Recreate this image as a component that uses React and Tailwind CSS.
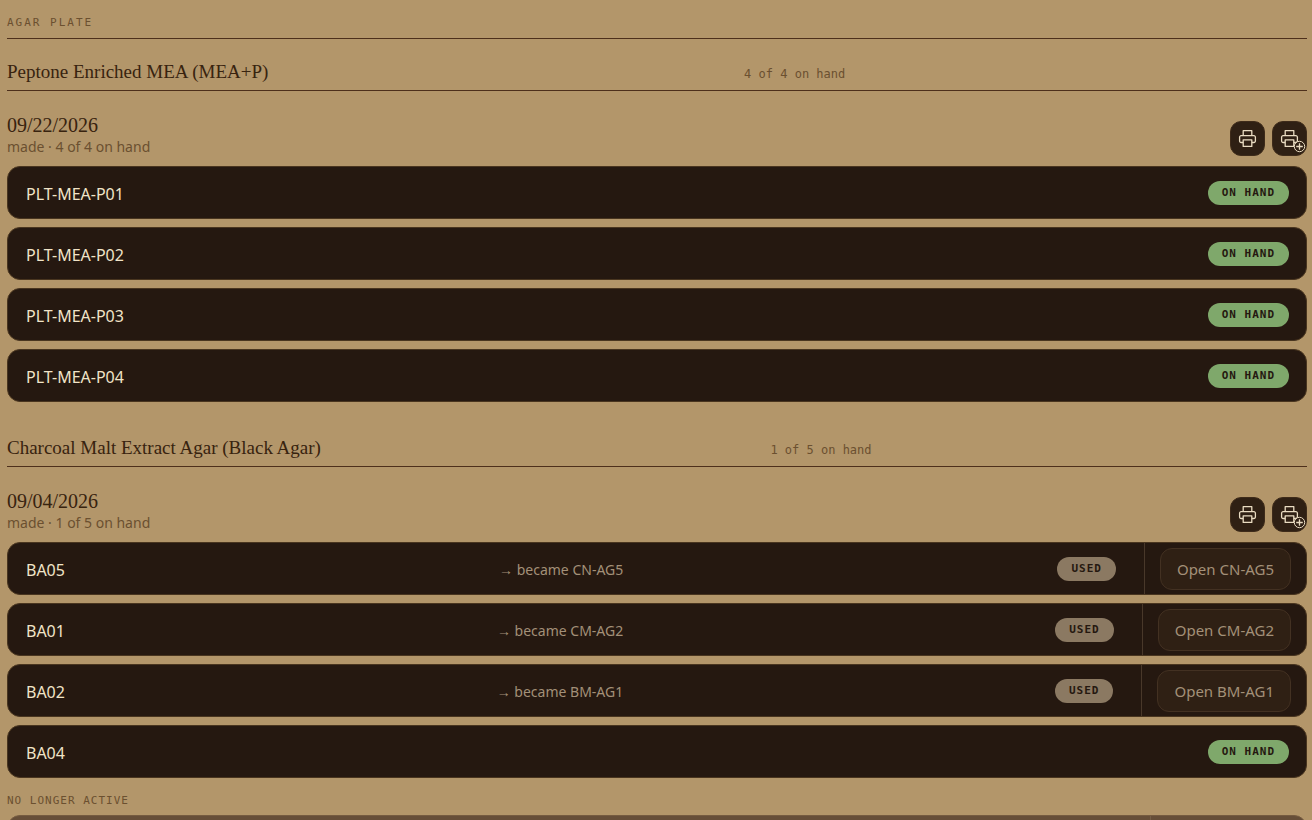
import React from 'react';

// ===== Data =====
const GROUPS = [
  {
    id: 'mea-p',
    name: 'Peptone Enriched MEA (MEA+P)',
    count: '4 of 4 on hand',
    date: '09/22/2026',
    plates: [
      { code: 'PLT-MEA-P01' },
      { code: 'PLT-MEA-P02' },
      { code: 'PLT-MEA-P03' },
      { code: 'PLT-MEA-P04' },
    ],
  },
  {
    id: 'black-agar',
    name: 'Charcoal Malt Extract Agar (Black Agar)',
    count: '1 of 5 on hand',
    date: '09/04/2026',
    plates: [
      { code: 'BA05', became: 'CN-AG5' },
      { code: 'BA01', became: 'CM-AG2' },
      { code: 'BA02', became: 'BM-AG1' },
      { code: 'BA04' },
    ],
  },
];

// ===== Icons =====
function PrinterIcon() {
  return (
    <svg width="19" height="19" viewBox="0 0 19 19" fill="none" stroke="currentColor" strokeWidth="1.3" strokeLinejoin="round" aria-hidden="true">
      <path d="M5.2 6.7V1.7h8.6v5" />
      <path d="M5.2 13.5H3.1a1.5 1.5 0 0 1-1.5-1.5V8.2a1.5 1.5 0 0 1 1.5-1.5h12.8a1.5 1.5 0 0 1 1.5 1.5V12a1.5 1.5 0 0 1-1.5 1.5h-2.1" />
      <path d="M5.2 10.8h8.6v6.6H5.2z" />
    </svg>
  );
}

function PlusBadge() {
  return (
    <svg className="absolute right-0 bottom-0.5" width="13" height="13" viewBox="0 0 13 13" fill="none" stroke="currentColor" aria-hidden="true">
      <circle cx="6.5" cy="6.5" r="5.2" fill="#2f2014" strokeWidth="1" />
      <path d="M6.5 3.2v6.6M3.2 6.5h6.6" strokeWidth="1.3" />
    </svg>
  );
}

// ===== Status pill =====
function Pill({ used }) {
  return (
    <span
      className={`shrink-0 h-6 px-3.5 pt-0.5 flex items-center rounded-full font-['DejaVu_Sans_Mono',monospace] text-[11px] font-bold tracking-[1px] uppercase text-[#251810] ${
        used ? 'bg-[#8b7962]' : 'bg-[#7fa86b]'
      }`}
    >
      {used ? 'Used' : 'On hand'}
    </span>
  );
}

// ===== Plate row =====
function PlateRow({ plate }) {
  return (
    <li className="min-h-[53px] flex items-stretch rounded-[13px] border border-[#49351f] bg-[#251810] overflow-hidden">
      <button type="button" className={`flex-1 min-w-0 flex items-center gap-3.5 pl-[18px] text-left ${plate.became ? 'pr-7' : 'pr-[17px]'}`}>
        <span className="flex-auto pt-0.5 text-base text-[#f1e4c8]">{plate.code}</span>
        {plate.became && <span className="flex-auto pt-0.5 text-sm text-[#a39078]">→ became {plate.became}</span>}
        <Pill used={Boolean(plate.became)} />
      </button>
      {plate.became && (
        <div className="flex items-center border-l border-[#49382a] px-[15px]">
          <button type="button" className="h-[42px] px-4 pt-0.5 rounded-xl border border-[#433122] bg-[#2f2014] text-[15px] text-[#a39078]">
            Open {plate.became}
          </button>
        </div>
      )}
    </li>
  );
}

// ===== Batch group =====
function Group({ group }) {
  const iconButton = 'relative size-[35px] flex items-center justify-center rounded-[11px] border border-[#3e2b1a] bg-[#2f2014] text-[#eadcc2]';

  return (
    <section>
      <header className="h-[52px] pt-3.5 flex items-center gap-3.5 border-b border-[#4d2f1b]">
        <h2 className="flex-auto font-['Liberation_Serif',serif] text-[19px] leading-6 text-[#38230f]">{group.name}</h2>
        <span className="flex-auto pt-1 font-['DejaVu_Sans_Mono',monospace] text-xs text-[#6b5030]">{group.count}</span>
      </header>

      <div className="flex items-end justify-between pt-[22px] pb-2.5">
        <div>
          <h3 className="font-['Liberation_Serif',serif] text-xl leading-6 text-[#38230f]">{group.date}</h3>
          <p className="text-sm leading-[19px] text-[#6b5030]">made · {group.count}</p>
        </div>
        <div className="flex gap-[7px]">
          <button type="button" className={iconButton} aria-label="Print labels">
            <PrinterIcon />
          </button>
          <button type="button" className={iconButton} aria-label="Add labels to print queue">
            <PrinterIcon />
            <PlusBadge />
          </button>
        </div>
      </div>

      <ul className="flex flex-col gap-2">
        {group.plates.map(plate => (
          <PlateRow key={plate.code} plate={plate} />
        ))}
      </ul>
    </section>
  );
}

// ===== Page =====
export default function App() {
  return (
    <main className="h-screen overflow-hidden bg-[#b3966a] pl-[7px] pr-[5px] font-['Noto_Sans',sans-serif]">
      <h1 className="h-[39px] pt-[15px] border-b border-[#4d2f1b] font-['DejaVu_Sans_Mono',monospace] text-[11px] leading-4 tracking-[2px] uppercase text-[#6b5030]">
        Agar plate
      </h1>

      <div className="flex flex-col gap-[13px]">
        {GROUPS.map(group => (
          <Group key={group.id} group={group} />
        ))}
      </div>

      <h4 className="pt-[15px] pb-1.5 font-['DejaVu_Sans_Mono',monospace] text-[11px] leading-4 tracking-[1px] uppercase text-[#6b5030]">
        No longer active
      </h4>
      <div className="h-[53px] flex rounded-[13px] border border-[#755b40] bg-[#664e38]">
        <div className="flex-1" />
        <div className="w-[156px] border-l border-[#755e47]" />
      </div>
    </main>
  );
}
